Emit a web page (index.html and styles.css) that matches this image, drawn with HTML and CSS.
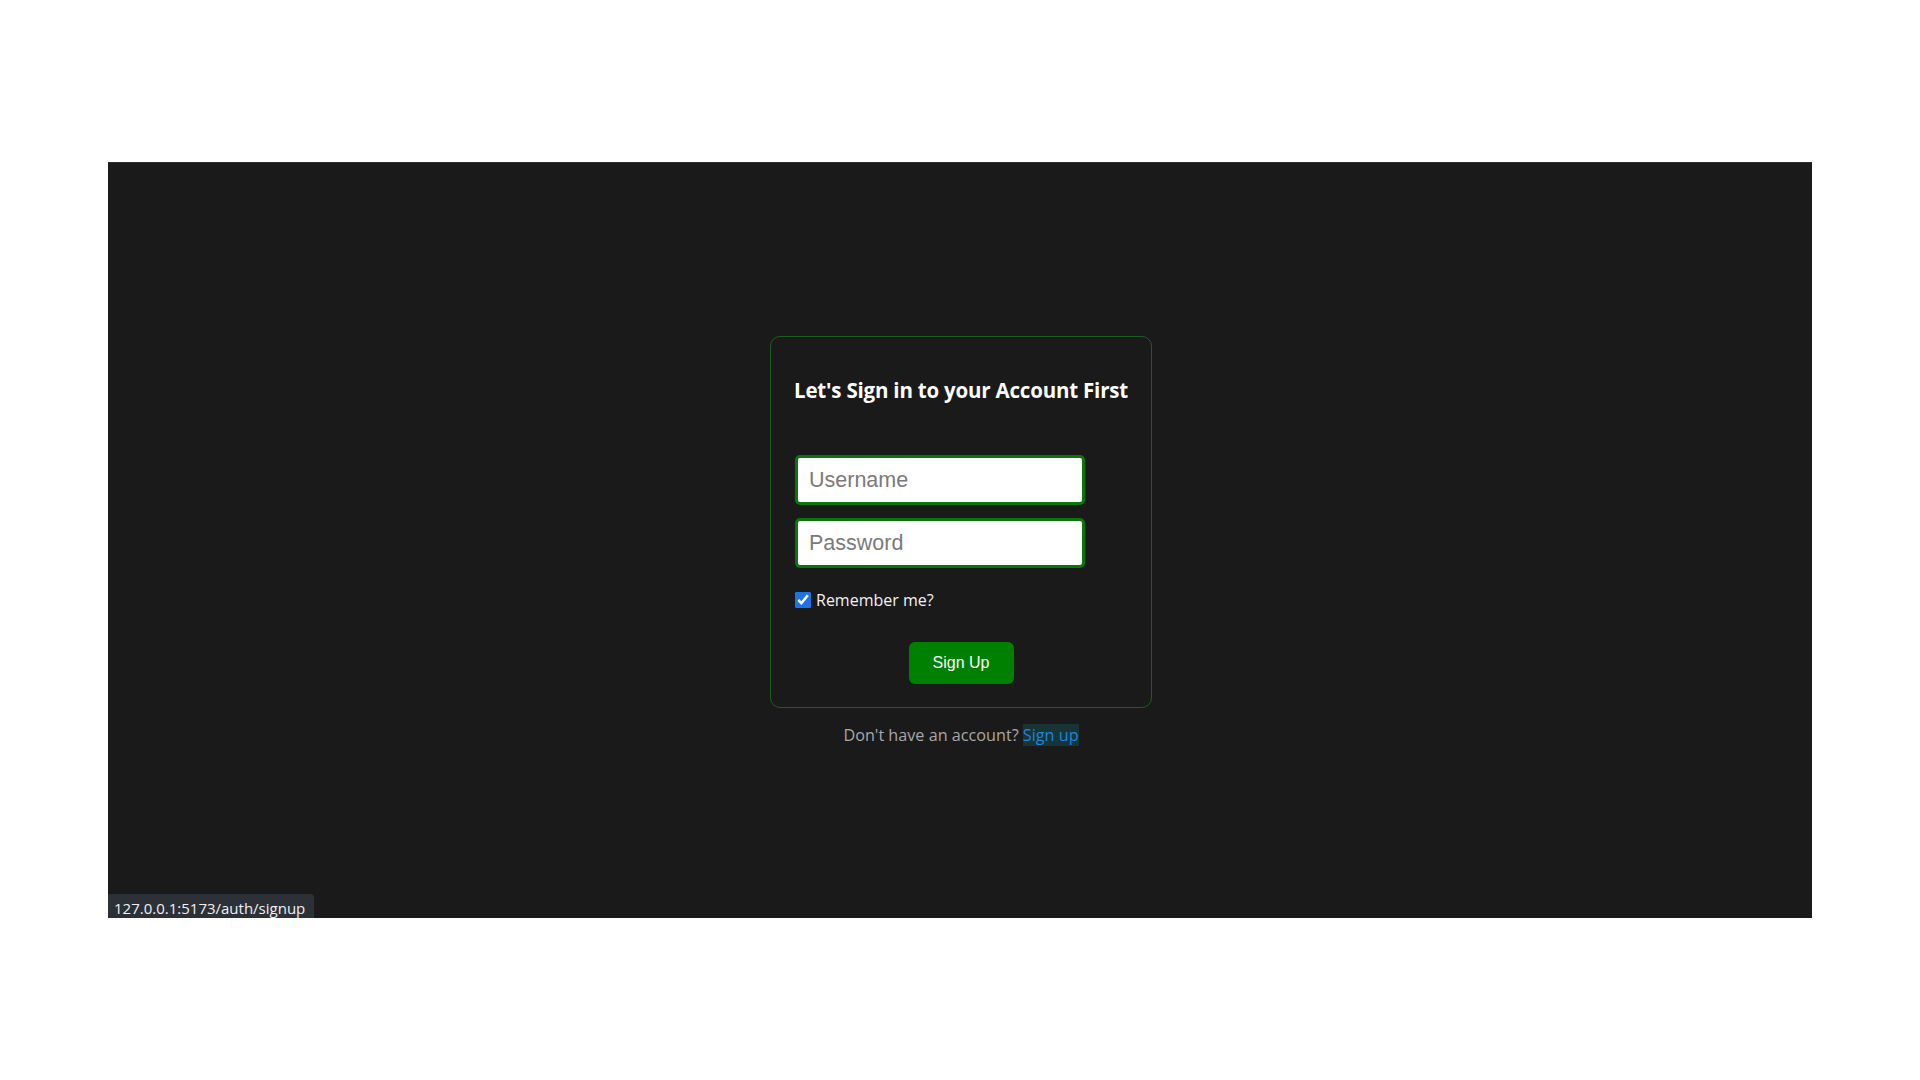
FILE: index.html
```html
<!DOCTYPE html>
<html lang="en">
<head>
<meta charset="utf-8">
<title>Sign in</title>
<link rel="stylesheet" href="styles.css">
</head>
<body>
<div class="frame">
  <main class="screen">
    <div class="auth">
      <form class="card">
        <h1 class="title">Let's Sign in to your Account First</h1>
        <div class="fields">
          <input class="field" type="text" placeholder="Username">
          <input class="field" type="password" placeholder="Password">
        </div>
        <label class="remember"><input class="check" type="checkbox" checked> Remember me?</label>
        <div class="actions"><button class="btn" type="button">Sign Up</button></div>
      </form>
      <p class="footer">Don't have an account? <a class="link" href="#">Sign up</a></p>
    </div>
    <div class="status">127.0.0.1:5173/auth/signup</div>
  </main>
</div>
</body>
</html>
```
FILE: styles.css
```css
html, body { margin: 0; padding: 0; background: #ffffff; }
.frame { padding: 162px 108px; }
.screen {
  position: relative;
  height: 756px;
  background: #1a1a1a;
  border-top: 1px solid #2e2e2e;
  box-sizing: border-box;
  display: flex;
  justify-content: center;
  align-items: flex-start;
}
.auth {
  margin-top: 173px;
  display: flex;
  flex-direction: column;
  align-items: center;
  margin-left: 2px;
}
.card {
  width: 382px;
  height: 372px;
  box-sizing: border-box;
  border: 1px solid #1f5c1f;
  border-radius: 10px;
  padding: 40px 24px 20px 24px;
  display: flex;
  flex-direction: column;
}
.title {
  margin: 0 -12px;
  white-space: nowrap;
  font-family: "Open Sans", sans-serif;
  font-weight: 700;
  font-size: 20.5px;
  color: #ffffff;
  text-align: center;
  line-height: 26px;
  letter-spacing: -0.2px;
}
.fields {
  margin-top: 52px;
  display: flex;
  flex-direction: column;
  gap: 13px;
}
.field {
  width: 290px;
  height: 50px;
  box-sizing: border-box;
  border: 3px solid #0a760a;
  border-radius: 5px;
  padding: 0 11px;
  font-family: "Liberation Sans", Arial, sans-serif;
  font-size: 21.5px;
  color: #333;
  background: #ffffff;
  outline: none;
  margin: 0;
}
.field::placeholder { color: #7a7a7a; }
.remember {
  margin-top: 21px;
  display: flex;
  align-items: center;
  gap: 5px;
  font-family: "Open Sans", sans-serif;
  font-size: 16px;
  color: #f2f2f2;
}
.check {
  margin: 0;
  width: 16px;
  height: 16px;
  accent-color: #1a73e8;
}
.actions {
  margin-top: 31px;
  display: flex;
  justify-content: center;
}
.btn {
  width: 105px;
  height: 42px;
  background: #008000;
  color: #ffffff;
  border: none;
  border-radius: 6px;
  font-family: "Liberation Sans", Arial, sans-serif;
  font-size: 16px;
  cursor: pointer;
}
.footer {
  margin: 16px 0 0 0;
  font-family: "Open Sans", sans-serif;
  font-size: 16.2px;
  color: #a8a8a8;
  line-height: 22px;
}
.link {
  color: #1f84e0;
  text-decoration: none;
  background: #173535;
}
.status {
  position: absolute;
  left: 0;
  bottom: 0;
  height: 24px;
  padding: 0 9px 0 6px;
  background: #2b3137;
  color: #f0f0f0;
  border-top-right-radius: 4px;
  font-family: "Open Sans", sans-serif;
  font-size: 15px;
  line-height: 28px;
}
```
